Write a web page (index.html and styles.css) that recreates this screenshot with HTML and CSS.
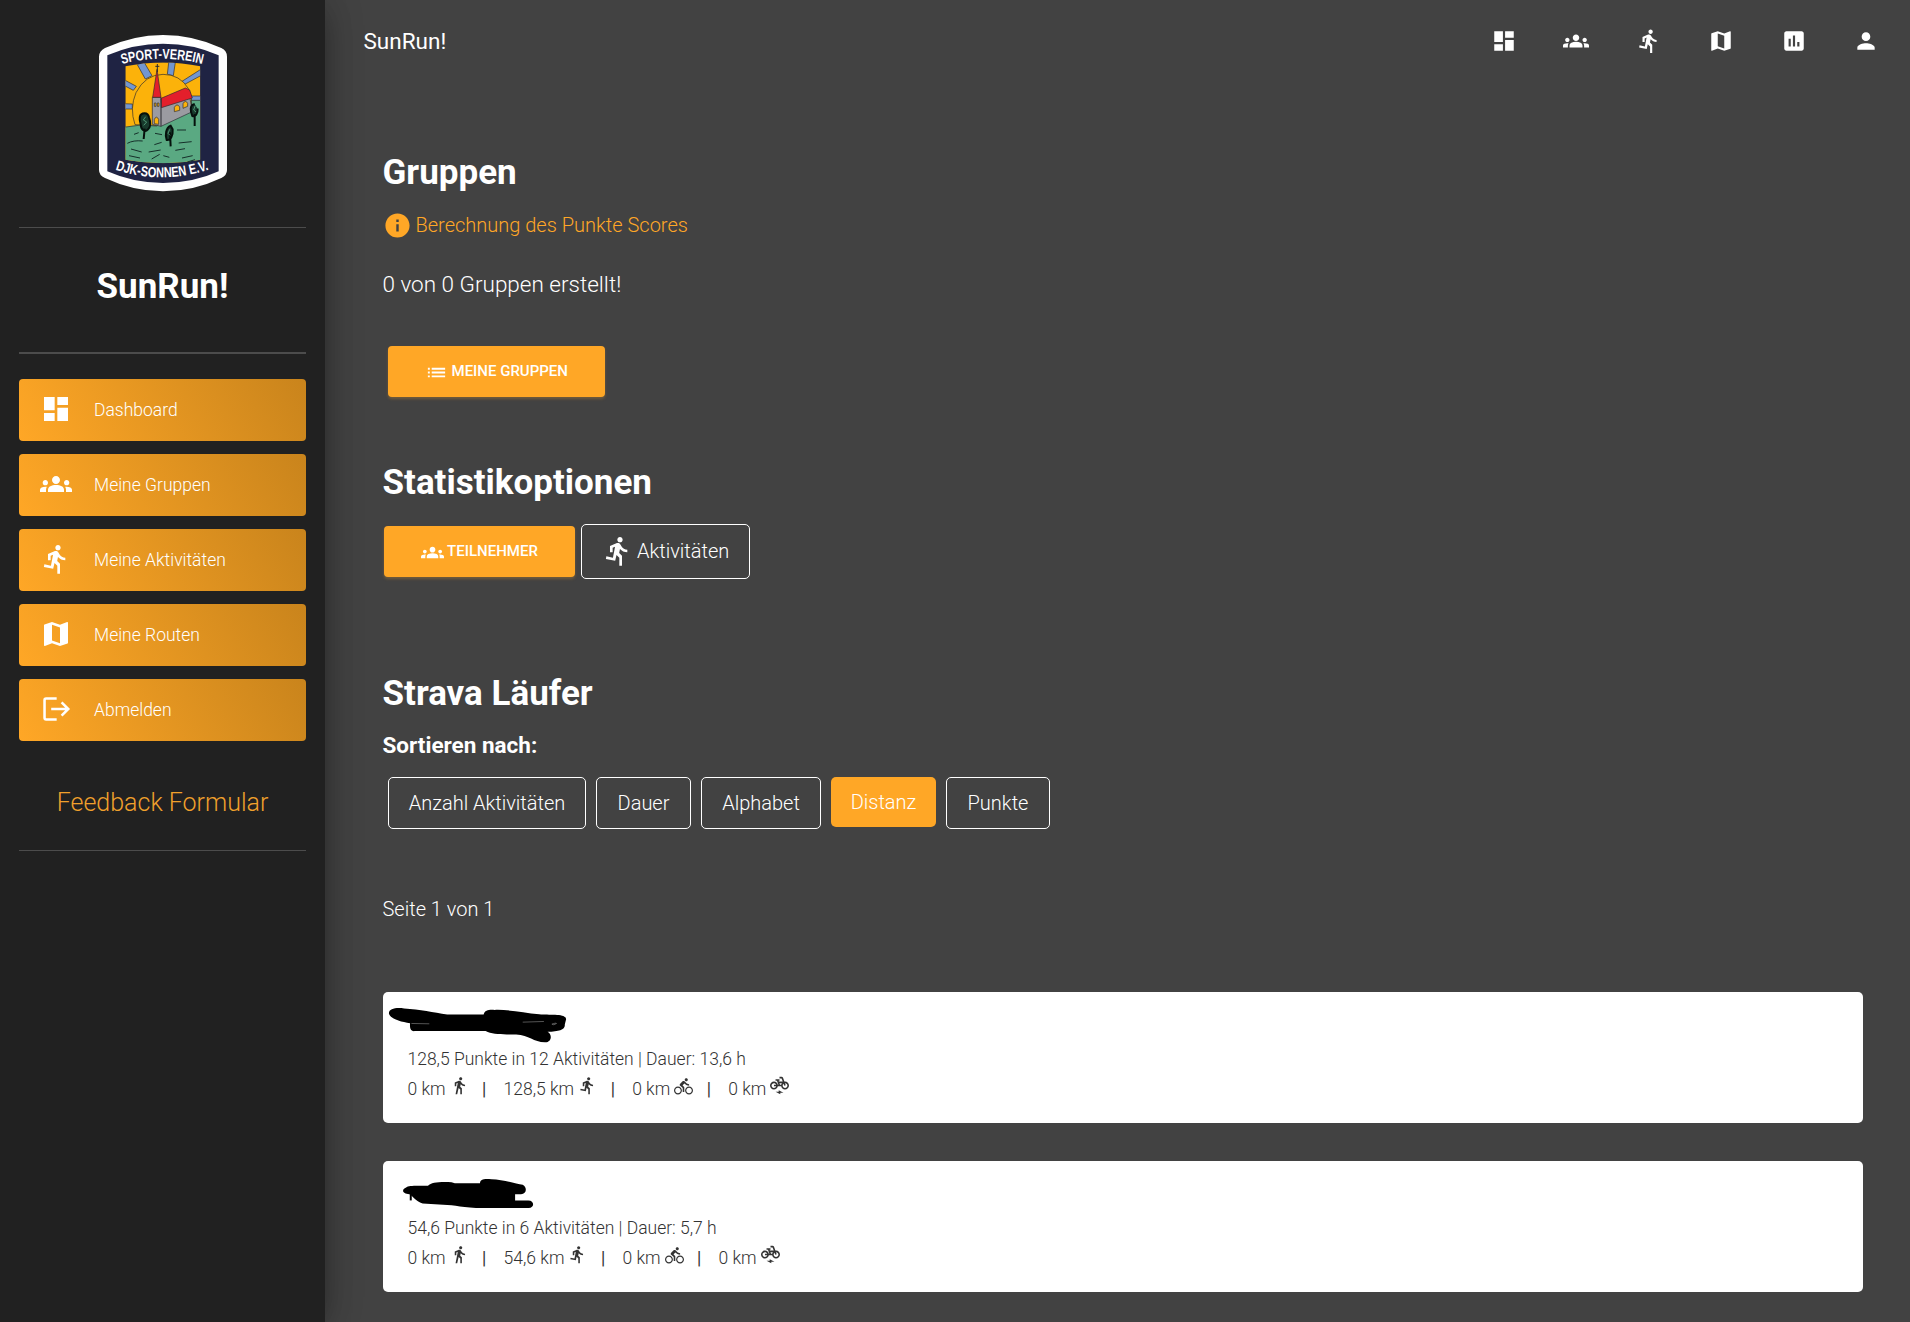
FILE: index.html
```html
<!DOCTYPE html>
<html lang="de">
<head>
<meta charset="utf-8">
<title>SunRun!</title>
<link rel="stylesheet" href="styles.css">
</head>
<body>
<svg class="sprite" aria-hidden="true">
  <symbol id="dashboard" viewBox="0 0 24 24"><path d="M3 13h8V3H3v10zm0 8h8v-6H3v6zm10 0h8V11h-8v10zm0-18v6h8V3h-8z"/></symbol>
  <symbol id="groups" viewBox="0 0 24 24"><path d="M12 12.75c1.63 0 3.07.39 4.24.9 1.08.48 1.76 1.56 1.76 2.73V18H6v-1.61c0-1.18.68-2.26 1.76-2.73 1.17-.52 2.61-.91 4.24-.91zM4 13c1.1 0 2-.9 2-2s-.9-2-2-2-2 .9-2 2 .9 2 2 2zm1.13 1.1c-.37-.06-.74-.1-1.13-.1-.99 0-1.93.21-2.78.58C.48 14.9 0 15.62 0 16.43V18h4.5v-1.61c0-.83.23-1.61.63-2.29zM20 13c1.1 0 2-.9 2-2s-.9-2-2-2-2 .9-2 2 .9 2 2 2zm4 3.43c0-.81-.48-1.53-1.22-1.85-.85-.37-1.79-.58-2.78-.58-.39 0-.76.04-1.13.1.4.68.63 1.46.63 2.29V18H24v-1.57zM12 6c1.66 0 3 1.34 3 3s-1.34 3-3 3-3-1.34-3-3 1.34-3 3-3z"/></symbol>
  <symbol id="run" viewBox="0 0 24 24"><path d="M13.49 5.48c1.1 0 2-.9 2-2s-.9-2-2-2-2 .9-2 2 .9 2 2 2zm-3.6 13.9l1-4.4 2.1 2v6h2v-7.5l-2.1-2 .6-3c1.3 1.5 3.3 2.5 5.5 2.5v-2c-1.9 0-3.5-1-4.3-2.4l-1-1.6c-.4-.6-1-1-1.7-1-.3 0-.5.1-.8.1l-5.2 2.2v4.7h2v-3.4l1.8-.7-1.6 8.1-4.9-1-.4 2 7 1.4z"/></symbol>
  <symbol id="walk" viewBox="0 0 24 24"><path d="M13.5 5.5c1.1 0 2-.9 2-2s-.9-2-2-2-2 .9-2 2 .9 2 2 2zM9.8 8.9L7 23h2.1l1.8-8 2.1 2v6h2v-7.5l-2.1-2 .6-3C14.8 12 16.8 13 19 13v-2c-1.9 0-3.5-1-4.3-2.4l-1-1.6c-.4-.6-1-1-1.7-1-.3 0-.5.1-.8.1L6 8.3V13h2V9.6l1.8-.7"/></symbol>
  <symbol id="bike" viewBox="0 0 24 24"><path d="M15.5 5.5c1.1 0 2-.9 2-2s-.9-2-2-2-2 .9-2 2 .9 2 2 2zM5 12c-2.8 0-5 2.2-5 5s2.2 5 5 5 5-2.2 5-5-2.2-5-5-5zm0 8.5c-1.9 0-3.5-1.6-3.5-3.5s1.6-3.5 3.5-3.5 3.5 1.6 3.5 3.5-1.6 3.5-3.5 3.5zm5.8-10l2.4-2.4.8.8c1.3 1.3 3 2.1 5.1 2.1V9c-1.5 0-2.7-.6-3.6-1.5l-1.9-1.9c-.5-.4-1-.6-1.6-.6s-1.1.2-1.4.6L7.8 8.4c-.4.4-.6.9-.6 1.4 0 .6.2 1.1.6 1.4L11 14v5h2v-6.2l-2.2-2.3zM19 12c-2.8 0-5 2.2-5 5s2.2 5 5 5 5-2.2 5-5-2.2-5-5-5zm0 8.5c-1.9 0-3.5-1.6-3.5-3.5s1.6-3.5 3.5-3.5 3.5 1.6 3.5 3.5-1.6 3.5-3.5 3.5z"/></symbol>
  <symbol id="ebike" viewBox="0 0 24 24"><path d="M19 7h-.82l-1.7-4.68C16.19 1.53 15.44 1 14.6 1H12v2h2.6l1.46 4h-4.81l-.36-1H12V4H7v2h1.75l1.82 5H9.9c-.44-2.23-2.31-3.88-4.65-3.99C2.45 6.87 0 9.2 0 12c0 2.8 2.2 5 5 5 2.46 0 4.45-1.69 4.9-4h4.2c.44 2.23 2.31 3.88 4.65 3.99 2.8.13 5.25-2.19 5.25-5C24 9.2 21.8 7 19 7zM7.82 13c-.4 1.17-1.49 2-2.82 2-1.68 0-3-1.32-3-3s1.32-3 3-3c1.33 0 2.42.83 2.82 2H5v2h2.82zm6.28-2h-1.4l-.73-2H15c-.44.58-.76 1.25-.9 2zm4.9 4c-1.68 0-3-1.32-3-3 0-.93.41-1.73 1.05-2.28l.96 2.64 1.88-.68-.97-2.67c.03 0 .06-.01.08-.01 1.68 0 3 1.32 3 3s-1.32 3-3 3zM11 20H7l6 3v-2h4l-6-3z"/></symbol>
  <symbol id="map" viewBox="0 0 24 24"><path d="M20.5 3l-.16.03L15 5.1 9 3 3.36 4.9c-.21.07-.36.25-.36.48V20.5c0 .28.22.5.5.5l.16-.03L9 18.9l6 2.1 5.64-1.9c.21-.07.36-.25.36-.48V3.5c0-.28-.22-.5-.5-.5zM15 19l-6-2.11V5l6 2.11V19z"/></symbol>
  <symbol id="chart" viewBox="0 0 24 24"><path d="M19 3H5c-1.1 0-2 .9-2 2v14c0 1.1.9 2 2 2h14c1.1 0 2-.9 2-2V5c0-1.1-.9-2-2-2zM9 17H7v-7h2v7zm4 0h-2V7h2v10zm4 0h-2v-4h2v4z"/></symbol>
  <symbol id="person" viewBox="0 0 24 24"><path d="M12 12c2.21 0 4-1.79 4-4s-1.79-4-4-4-4 1.79-4 4 1.79 4 4 4zm0 2c-2.67 0-8 1.34-8 4v2h16v-2c0-2.66-5.33-4-8-4z"/></symbol>
  <symbol id="info" viewBox="0 0 24 24"><path d="M12 2C6.48 2 2 6.48 2 12s4.48 10 10 10 10-4.48 10-10S17.52 2 12 2zm1 15h-2v-6h2v6zm0-8h-2V7h2v2z"/></symbol>
  <symbol id="list" viewBox="0 0 24 24"><path d="M3 13h2v-2H3v2zm0 4h2v-2H3v2zm0-8h2V7H3v2zm4 4h14v-2H7v2zm0 4h14v-2H7v2zM7 7v2h14V7H7z"/></symbol>
  <symbol id="logout" viewBox="0 0 24 24"><path fill="none" stroke="currentColor" stroke-width="1.9" d="M12.5 4.2H4.6a1.2 1.2 0 0 0-1.2 1.2v13.2a1.2 1.2 0 0 0 1.2 1.2h7.9M8.4 12h12.2M16.2 7l5 5-5 5"/></symbol>
</svg>

<div class="page">
  <aside class="sidebar">
    <div class="brand">
      <svg class="logo" viewBox="0 0 510 570" aria-label="Sport-Verein DJK-Sonnen e.V.">
        <path fill="#fff" d="M57 110Q57 93 75 84Q160 45 249 45Q340 45 424 84Q441 92 441 110V450Q441 466 424 474Q340 514 249 514Q160 514 75 474Q57 466 57 450Z"/>
        <path fill="#1f2343" d="M82 106Q160 71 249 71Q340 71 416 106V454Q340 489 249 489Q160 489 82 454Z"/>
        <clipPath id="scene"><path d="M136 139Q250 116 361 139V419Q250 440 136 419Z"/></clipPath>
        <g clip-path="url(#scene)" stroke="#2b2b30" stroke-width="2">
          <path fill="#fcb20a" d="M130 110H370V450H130Z"/>
          <g fill="#7396cf">
            <path d="M172 134L196 177L216 167L192 126ZM267 120L262 163L280 167L287 120ZM306 184L364 147V166L314 193ZM328 228H366V243H334ZM130 178L169 199L160 211L130 195ZM130 251L157 252V267L130 267Z"/>
          </g>
          <path fill="#fcb20a" d="M165 314Q148 265 168 218Q195 164 249 163Q300 163 326 207Q341 240 332 280L290 320Z"/>
          <path fill="#5aa982" d="M130 322Q180 311 230 318L335 265L334 241H370V450H130Z"/>
          <path fill="#9b9ba1" d="M217 232H243L246 251L329 230L337 275L243 319L217 313Z"/>
          <path fill="#e31f2b" d="M231 148L218 232H243ZM243 235L316 204L329 210L337 234L244 263Z"/>
          <path fill="none" stroke-width="3" d="M232 156V132M226 139H238M243 235V319"/>
          <path fill="#fcb20a" d="M223 311V298Q229 285 236 298V313ZM283 275V262Q291 248 299 261V271ZM309 265V251Q316 238 323 250V259ZM223 249H228V259H223ZM232 249H237V259H232Z"/>
        </g>
        <g fill="none" stroke="#16302a" stroke-width="3">
          <path d="M142 370Q160 360 188 363M225 340L246 344M291 330H318M245 367L223 374M296 369L335 365M153 387L185 396M206 396L242 390M147 407L180 414M215 417L239 403M286 391L315 386M306 414L338 407M322 426L345 419M162 343L176 338M250 407L268 412"/>
        </g>
        <g fill="#173a2c" stroke="#05100c" stroke-width="6">
          <path d="M194 280C175 280 178 300 182 312C182 330 196 338 203 329C214 320 211 303 207 292C205 283 201 280 194 280ZM194 326L191 357M344 252C328 255 331 274 337 288C346 291 354 282 353 266M344 282V318M272 317C257 323 255 345 260 360C270 362 280 350 278 328ZM270 337L272 379"/>
        </g>
        <path fill="none" stroke="#4f9574" stroke-width="3" d="M197 290L190 300L200 306L191 316M345 258L341 270L348 276M269 328L264 340L270 346"/>
        <path id="top-arc" fill="none" d="M126 132Q247 101 368 132"/>
        <path id="bottom-arc" fill="none" d="M106 449Q248 496 392 447"/>
        <g class="logo-text">
          <text textLength="244" lengthAdjust="spacingAndGlyphs"><textPath href="#top-arc" textLength="244" lengthAdjust="spacingAndGlyphs">SPORT-VEREIN</textPath></text>
          <text textLength="286" lengthAdjust="spacingAndGlyphs"><textPath href="#bottom-arc" textLength="286" lengthAdjust="spacingAndGlyphs">DJK-SONNEN E.V.</textPath></text>
        </g>
      </svg>
    </div>
    <h1 class="app-name">SunRun!</h1>
    <nav class="menu">
      <a class="menu-item"><svg><use href="#dashboard"/></svg><span>Dashboard</span></a>
      <a class="menu-item"><svg><use href="#groups"/></svg><span>Meine Gruppen</span></a>
      <a class="menu-item"><svg><use href="#run"/></svg><span>Meine Aktivitäten</span></a>
      <a class="menu-item"><svg><use href="#map"/></svg><span>Meine Routen</span></a>
      <a class="menu-item"><svg><use href="#logout"/></svg><span>Abmelden</span></a>
    </nav>
    <a class="feedback">Feedback Formular</a>
  </aside>

  <main class="main">
    <header class="topbar">
      <span class="topbar-title">SunRun!</span>
      <nav class="topbar-icons">
        <svg><use href="#dashboard"/></svg>
        <svg><use href="#groups"/></svg>
        <svg><use href="#run"/></svg>
        <svg><use href="#map"/></svg>
        <svg><use href="#chart"/></svg>
        <svg><use href="#person"/></svg>
      </nav>
    </header>

    <section class="groups">
      <h2>Gruppen</h2>
      <a class="info"><svg><use href="#info"/></svg><span>Berechnung des Punkte Scores</span></a>
      <p class="count">0 von 0 Gruppen erstellt!</p>
      <button class="button button-groups"><svg><use href="#list"/></svg><span>MEINE GRUPPEN</span></button>
    </section>

    <section class="options">
      <h2>Statistikoptionen</h2>
      <div class="option-row">
        <button class="button button-members"><svg><use href="#groups"/></svg><span>TEILNEHMER</span></button>
        <button class="button-outline"><svg><use href="#run"/></svg><span>Aktivitäten</span></button>
      </div>
    </section>

    <section class="runners">
      <h2>Strava Läufer</h2>
      <h3>Sortieren nach:</h3>
      <div class="sort-row">
        <button class="sort sort-count">Anzahl Aktivitäten</button>
        <button class="sort sort-time">Dauer</button>
        <button class="sort sort-name">Alphabet</button>
        <button class="sort sort-distance active">Distanz</button>
        <button class="sort sort-points">Punkte</button>
      </div>
      <p class="pager">Seite 1 von 1</p>

      <article class="card">
        <svg class="redaction" viewBox="0 0 570 160">
          <path d="M16 64C16 50 40 46 62 50C110 53 150 62 192 68H302C306 54 318 53 335 54C370 52 420 62 470 67C500 70 551 64 551 82L547 98C549 114 530 119 495 120C510 127 508 153 487 152C452 150 440 131 400 128C360 128 330 130 308 118H95C83 120 78 112 80 94C50 90 18 80 16 64Z"/>
          <path class="gap" d="M84 95L138 96M420 91L484 89M508 97L518 94L522 95L514 99Z"/>
        </svg>
        <p class="stats">128,5 Punkte in 12 Aktivitäten | Dauer: 13,6 h</p>
        <div class="distances">
          <span class="walk">0 km<svg><use href="#walk"/></svg></span><i>|</i>
          <span class="running">128,5 km<svg><use href="#run"/></svg></span><i>|</i>
          <span class="cycling">0 km<svg><use href="#bike"/></svg></span><i>|</i>
          <span class="electric">0 km<svg><use href="#ebike"/></svg></span>
        </div>
      </article>

      <article class="card">
        <svg class="redaction" viewBox="0 0 570 160">
          <path d="M68 80C76 73 105 75 134 75C145 64 165 63 205 64L215 67H291C291 53 307 53 326 55C360 56 400 68 420 72C435 81 431 99 415 100H397V119H437C456 119 456 142 438 142H300C240 142 215 132 180 132L118 128C95 120 90 107 78 100C58 99 52 87 68 80Z"/>
          <path d="M79 100H85V119H79Z"/>
        </svg>
        <p class="stats">54,6 Punkte in 6 Aktivitäten | Dauer: 5,7 h</p>
        <div class="distances">
          <span class="walk">0 km<svg><use href="#walk"/></svg></span><i>|</i>
          <span class="running">54,6 km<svg><use href="#run"/></svg></span><i>|</i>
          <span class="cycling">0 km<svg><use href="#bike"/></svg></span><i>|</i>
          <span class="electric">0 km<svg><use href="#ebike"/></svg></span>
        </div>
      </article>
    </section>
  </main>
</div>
</body>
</html>
```
FILE: styles.css
```css
* { box-sizing: border-box; }

body {
  margin: 0;
  background: #424242;
  color: #fff;
  font-family: Roboto, sans-serif;
  font-weight: 300;
}

h1, h2, h3, p { margin: 0; }
button { font: inherit; color: inherit; padding: 0; border: 0; background: none; }
svg { display: block; fill: currentColor; flex: none; }
.sprite { display: none; }

.page { display: flex; height: 1322px; overflow: hidden; }

/* Sidebar */
.sidebar {
  flex: none;
  width: 325px;
  padding: 0 19px;
  background: #212121;
  box-shadow: 0 10px 30px -8px rgba(0, 0, 0, .4), 0 0 38px rgba(0, 0, 0, .2);
}
.brand { height: 228px; padding: 20px 0 0 61px; border-bottom: 1px solid #4c4c4c; }
.logo { width: 170px; height: 190px; }
.logo-text { fill: #fff; font: bold 43px "Liberation Sans Narrow", "Liberation Sans", sans-serif; }
.app-name {
  height: 126px;
  padding-top: 39px;
  border-bottom: 2px solid #4c4c4c;
  font-size: 35px;
  line-height: 40px;
  font-weight: 700;
  text-align: center;
}
.menu { display: flex; flex-direction: column; gap: 13px; padding-top: 25px; }
.menu-item {
  display: flex;
  align-items: center;
  gap: 22px;
  height: 62px;
  padding-left: 21px;
  border-radius: 4px;
  background: linear-gradient(60deg, #ffa726, #c9841c);
  font-size: 17.5px;
}
.menu-item svg { width: 32px; height: 32px; margin-top: -2px; }
.feedback {
  display: block;
  height: 110px;
  padding-top: 45px;
  border-bottom: 1px solid #4c4c4c;
  color: #f0a02c;
  font-size: 25px;
  line-height: 34px;
  text-align: center;
}

/* Main column */
.main { flex: 1; padding: 0 47px 0 57.5px; }
.topbar {
  display: flex;
  justify-content: space-between;
  align-items: center;
  height: 81px;
  margin: 0 -29px 72px -19px;
}
.topbar-title { font-size: 22.5px; font-weight: 400; }
.topbar-icons { display: flex; gap: 46.4px; padding-right: 13px; }
.topbar-icons svg { width: 26px; height: 26px; }

h2 { font-size: 35px; line-height: 40px; font-weight: 700; }
h3 { margin-top: 16px; font-size: 22.5px; line-height: 30px; font-weight: 700; }

.info { display: flex; align-items: center; gap: 4px; height: 28px; margin-top: 18px; color: #ffa726; font-size: 20px; }
.info svg { width: 29px; height: 29px; }
.count { margin-top: 30px; font-size: 22.5px; line-height: 30px; }

.button {
  display: flex;
  align-items: center;
  justify-content: center;
  height: 51px;
  padding-bottom: 2px;
  border-radius: 4px;
  background: #ffa726;
  box-shadow: 0 2px 3px rgba(255, 167, 38, .25);
  font-size: 15px;
  font-weight: 500;
}
.button svg { width: 23px; height: 23px; margin-top: 4px; }
.button-groups { width: 217px; margin: 47px 0 0 5.5px; gap: 3.5px; }
.button-members { width: 191px; margin-left: 1.5px; gap: 3px; }

.options { margin-top: 66px; }
.option-row { display: flex; align-items: center; gap: 6px; height: 55px; margin-top: 21px; }
.button-outline {
  display: flex;
  align-items: center;
  width: 169px;
  height: 55px;
  padding: 0 0 1px 20px;
  gap: 3px;
  border: 1px solid #fff;
  border-radius: 5px;
  font-size: 20px;
}
.button-outline svg { width: 32px; height: 32px; }

.runners { margin-top: 95px; }
.sort-row { display: flex; align-items: flex-start; gap: 10px; height: 52px; margin: 17px 0 0 5.5px; }
.sort { height: 52px; border: 1px solid #fff; border-radius: 5px; font-size: 20px; }
.sort-count { width: 198px; }
.sort-time { width: 95px; }
.sort-name { width: 120px; }
.sort-distance { width: 105px; }
.sort-points { width: 104px; }
.sort.active { height: 50px; border: 0; background: #ffa726; }
.pager { margin: 66px 0 69px; font-size: 20px; line-height: 28px; }

/* Runner cards */
.card {
  position: relative;
  height: 131px;
  margin-bottom: 38px;
  padding: 52px 25px 0;
  border-radius: 5px;
  background: #fff;
  color: #333;
  font-size: 17.5px;
  line-height: 30px;
}
.redaction { position: absolute; left: 0; top: 0; width: 190px; height: 53px; fill: #000; }
.redaction .gap { fill: none; stroke: #aaa; stroke-width: 1.5; }
.distances { display: flex; }
.distances span { display: flex; }
.distances svg { width: 19px; height: 19px; margin-top: 2px; }
.distances i { width: 4px; margin: 0 17.5px 0 13.5px; font-style: normal; font-weight: 400; text-align: center; }
.walk svg, .running svg { margin-left: 4px; }
.distances .cycling svg { margin: 3px 0 0 4px; }
.electric svg { margin-left: 4px; }
```
